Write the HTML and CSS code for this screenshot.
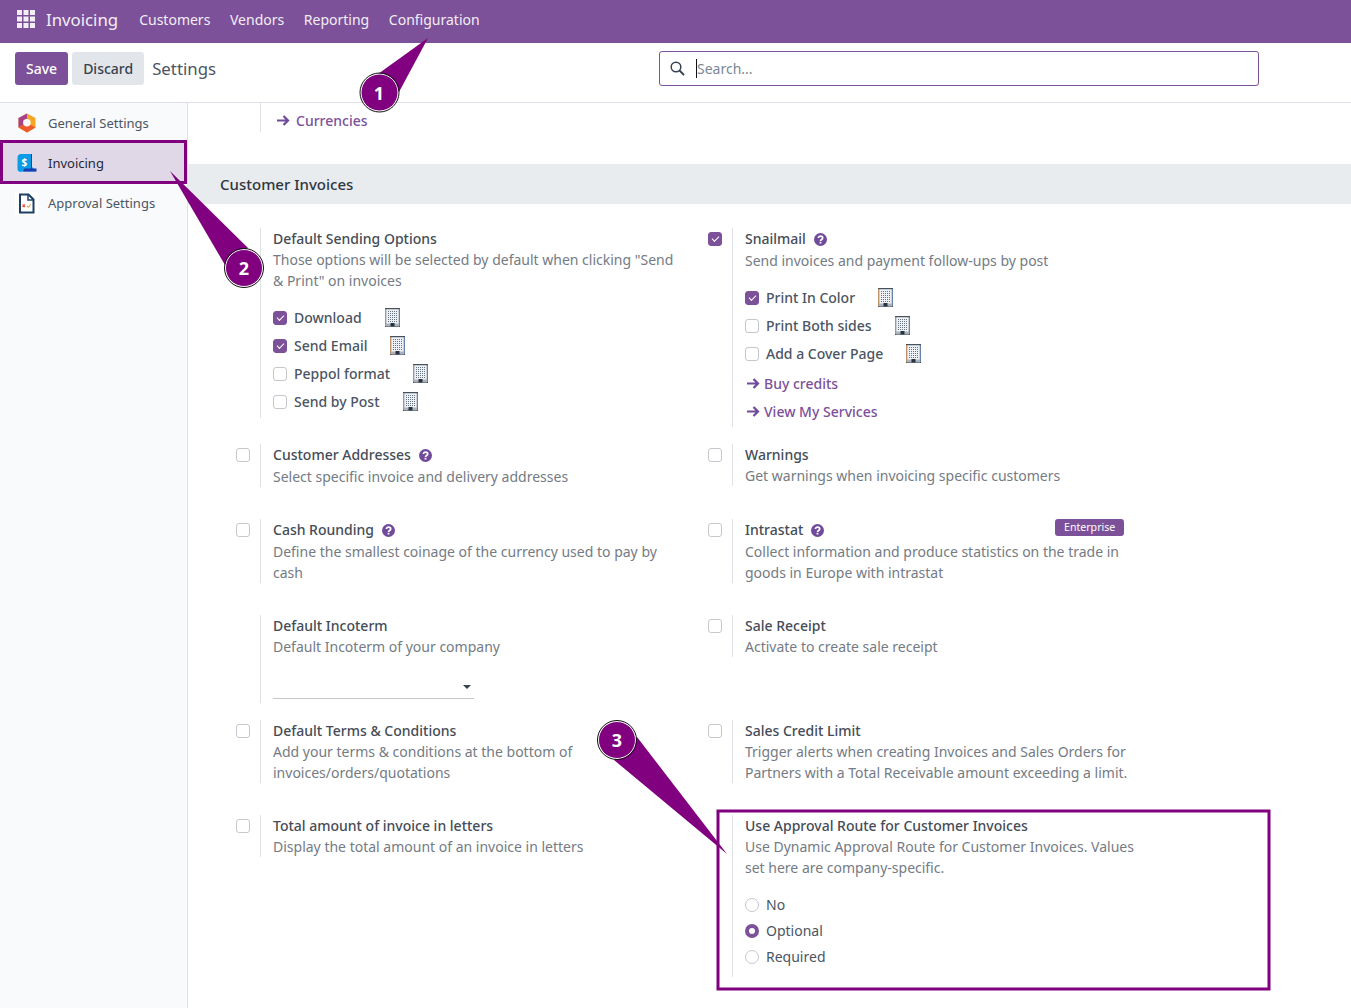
FILE: index.html
```html
<!DOCTYPE html>
<html lang="en">
<head>
<meta charset="utf-8">
<title>Invoicing Settings</title>
<link rel="stylesheet" href="styles.css">
</head>
<body>
<svg width="0" height="0" class="defs">
  <symbol id="bld" viewBox="0 0 15 19">
    <path d="M.6.600h13.800v17.800H.600z" fill="#eef2f6" stroke="#46535f" stroke-width="1.200"/>
    <path d="M3 3.500h9M3 5.500h9M3 7.500h9M3 9.500h9M3 11.500h9M3 13.500h9" stroke="#66727f" stroke-dasharray="1 1"/>
    <path d="M1 15.500h13v3H1z" fill="#aab3bd"/>
    <path d="M5.500 15h4v3.500h-4z" fill="#2b323b"/>
    <path d="M.5 1v17" stroke="#d9a26d" stroke-width=".8"/>
    <path d="M14.500 1v17" stroke="#6f8fb5" stroke-width=".8"/>
  </symbol>
  <symbol id="help" viewBox="0 0 13 13">
    <circle cx="6.500" cy="6.500" r="6.500" fill="#714b9b"/>
    <path d="M4.400 5c0-2.500 4.300-2.500 4.300 0 0 1.500-2.200 1.400-2.200 2.900" fill="none" stroke="#fff" stroke-width="1.700"/>
    <path d="M5.600 8.800h1.800v1.700H5.600z" fill="#fff"/>
  </symbol>
  <symbol id="arrow" viewBox="0 0 13 11">
    <path d="M0 5.500h10.500M6.500 1 11 5.500 6.500 10" fill="none" stroke="#714b9b" stroke-width="2.200"/>
  </symbol>
</svg>

<header class="navbar">
  <svg class="apps" viewBox="0 0 18 18" width="18" height="18">
    <path d="M0 0h5v5H0zM6.500 0h5v5h-5zM13 0h5v5h-5zM0 6.500h5v5H0zM6.500 6.500h5v5h-5zM13 6.500h5v5h-5zM0 13h5v5H0zM6.500 13h5v5h-5zM13 13h5v5h-5z" fill="#f3eef6"/>
  </svg>
  <span class="brand">Invoicing</span>
  <nav class="menu">
    <span>Customers</span><span>Vendors</span><span>Reporting</span><span>Configuration</span>
  </nav>
</header>

<div class="control">
  <div class="actions">
    <button class="btn primary">Save</button>
    <button class="btn secondary">Discard</button>
    <span class="crumb">Settings</span>
  </div>
  <div class="search">
    <svg width="15" height="15" viewBox="0 0 15 15"><circle cx="6" cy="6" r="4.800" fill="none" stroke="#374151" stroke-width="1.500"/><path d="m9.500 9.500 4.500 4.500" stroke="#374151" stroke-width="1.800"/></svg>
    <span class="caret"></span><span class="placeholder">Search...</span>
  </div>
</div>

<div class="main">
  <aside class="side">
    <div class="tab">
      <svg width="20" height="20" viewBox="0 0 20 20"><path d="M10 .5 18.500 5v9.500L10 19.500 1.500 14.500V5z" fill="#f5a623"/><path d="M10 .5 1.500 5v9.500l4.500-2.500V7.500L10 5.500z" fill="#a8418a"/><path d="M1.500 14.500 10 19.500l8.500-5-4.500-2.500H6z" fill="#ef5a2c"/><circle cx="10" cy="9.800" r="3.700" fill="#f9fafb"/></svg>
      <span>General Settings</span>
    </div>
    <div class="tab active">
      <svg width="20" height="20" viewBox="0 0 20 20"><path d="M4 1h11v13l4 3.500v1H5l-1 .5c-2 0-3.500-1-3.500-3V4.500C.5 2.500 2 1 4 1z" fill="#0c9be6"/><path d="M15 1v14.500h4.500V18.500H6l1.500-3H14V1z" fill="#1c3db0"/><text x="4.500" y="13" class="dollar">$</text></svg>
      <span>Invoicing</span>
    </div>
    <div class="tab">
      <svg class="wide" width="23" height="23" viewBox="0 0 23 23"><rect width="23" height="23" fill="#fff"/><path d="M5 2.500h8.500L18.500 7.500v13H5z" fill="#fff" stroke="#1d3f66" stroke-width="2"/><path d="M13 2.500V8h5.500" fill="none" stroke="#1d3f66" stroke-width="1.500"/><path d="m7.500 12.500 2.500 2.500M10 12.500 7.500 15" stroke="#e8543a" stroke-width="1.100"/><path d="m12 14 1.300 1.300 2.500-3" fill="none" stroke="#e8a25c" stroke-width="1.100"/></svg>
      <span>Approval Settings</span>
    </div>
  </aside>

  <main class="content">
    <div class="currencies">
      <div class="cur-pane">
        <a class="link"><svg class="arr" width="13" height="11"><use href="#arrow"/></svg>Currencies</a>
      </div>
    </div>
    <h2 class="section">Customer Invoices</h2>

    <div class="grid">
      <div class="cell tall">
        <div class="lead"></div>
        <div class="pane">
          <div class="title">Default Sending Options</div>
          <div class="desc">Those options will be selected by default when clicking "Send &amp; Print" on invoices</div>
          <div class="opts pad">
            <label class="opt"><i class="cb on"></i>Download<svg class="bld" width="15" height="19"><use href="#bld"/></svg></label>
            <label class="opt"><i class="cb on"></i>Send Email<svg class="bld" width="15" height="19"><use href="#bld"/></svg></label>
            <label class="opt"><i class="cb"></i>Peppol format<svg class="bld" width="15" height="19"><use href="#bld"/></svg></label>
            <label class="opt"><i class="cb"></i>Send by Post<svg class="bld" width="15" height="19"><use href="#bld"/></svg></label>
          </div>
        </div>
      </div>
      <div class="cell tall">
        <div class="lead"><i class="cb on"></i></div>
        <div class="pane bottom">
          <div class="title hq">Snailmail<svg class="q" width="13" height="13"><use href="#help"/></svg></div>
          <div class="desc">Send invoices and payment follow-ups by post</div>
          <div class="opts">
            <label class="opt"><i class="cb on"></i>Print In Color<svg class="bld" width="15" height="19"><use href="#bld"/></svg></label>
            <label class="opt"><i class="cb"></i>Print Both sides<svg class="bld" width="15" height="19"><use href="#bld"/></svg></label>
            <label class="opt"><i class="cb"></i>Add a Cover Page<svg class="bld" width="15" height="19"><use href="#bld"/></svg></label>
          </div>
          <a class="link row"><svg class="arr" width="13" height="11"><use href="#arrow"/></svg>Buy credits</a>
          <a class="link row"><svg class="arr" width="13" height="11"><use href="#arrow"/></svg>View My Services</a>
        </div>
      </div>

      <div class="cell">
        <div class="lead"><i class="cb"></i></div>
        <div class="pane">
          <div class="title hq">Customer Addresses<svg class="q" width="13" height="13"><use href="#help"/></svg></div>
          <div class="desc">Select specific invoice and delivery addresses</div>
        </div>
      </div>
      <div class="cell">
        <div class="lead"><i class="cb"></i></div>
        <div class="pane">
          <div class="title">Warnings</div>
          <div class="desc">Get warnings when invoicing specific customers</div>
        </div>
      </div>

      <div class="cell">
        <div class="lead"><i class="cb"></i></div>
        <div class="pane">
          <div class="title hq">Cash Rounding<svg class="q" width="13" height="13"><use href="#help"/></svg></div>
          <div class="desc">Define the smallest coinage of the currency used to pay by cash</div>
        </div>
      </div>
      <div class="cell">
        <div class="lead"><i class="cb"></i></div>
        <div class="pane badge-host">
          <span class="badge">Enterprise</span>
          <div class="title hq">Intrastat<svg class="q" width="13" height="13"><use href="#help"/></svg></div>
          <div class="desc">Collect information and produce statistics on the trade in goods in Europe with intrastat</div>
        </div>
      </div>

      <div class="cell tall">
        <div class="lead"></div>
        <div class="pane">
          <div class="title">Default Incoterm</div>
          <div class="desc">Default Incoterm of your company</div>
          <div class="select"></div>
        </div>
      </div>
      <div class="cell">
        <div class="lead"><i class="cb"></i></div>
        <div class="pane">
          <div class="title">Sale Receipt</div>
          <div class="desc">Activate to create sale receipt</div>
        </div>
      </div>

      <div class="cell">
        <div class="lead"><i class="cb"></i></div>
        <div class="pane">
          <div class="title">Default Terms &amp; Conditions</div>
          <div class="desc">Add your terms &amp; conditions at the bottom of invoices/orders/quotations</div>
        </div>
      </div>
      <div class="cell">
        <div class="lead"><i class="cb"></i></div>
        <div class="pane">
          <div class="title">Sales Credit Limit</div>
          <div class="desc">Trigger alerts when creating Invoices and Sales Orders for Partners with a Total Receivable amount exceeding a limit.</div>
        </div>
      </div>

      <div class="cell">
        <div class="lead"><i class="cb"></i></div>
        <div class="pane">
          <div class="title">Total amount of invoice in letters</div>
          <div class="desc">Display the total amount of an invoice in letters</div>
        </div>
      </div>
      <div class="cell">
        <div class="lead"></div>
        <div class="pane">
          <div class="title">Use Approval Route for Customer Invoices</div>
          <div class="desc">Use Dynamic Approval Route for Customer Invoices. Values set here are company-specific.</div>
          <div class="radios">
            <label class="radio"><i class="rd"></i>No</label>
            <label class="radio"><i class="rd on"></i>Optional</label>
            <label class="radio"><i class="rd"></i>Required</label>
          </div>
        </div>
      </div>
    </div>
  </main>
</div>

<svg class="marks" width="1351" height="1008" viewBox="0 0 1351 1008">
  <g fill="none" stroke="#800080" stroke-width="3">
    <rect x="1.500" y="141.500" width="184" height="41"/>
    <rect x="718" y="811" width="551" height="178"/>
  </g>
  <g fill="#800080">
    <path d="M428 38 378 74 399 92z"/>
    <path d="M170 171 225 265 248 248z"/>
    <path d="M637 737 727 854 614 760z"/>
  </g>
  <g>
    <circle cx="379.500" cy="92.500" r="18.500" fill="#800080" stroke="#fff" stroke-width="1"/><circle cx="379.500" cy="92.500" r="19.500" fill="none" stroke="#111" stroke-width="1"/>
    <circle cx="244" cy="268" r="18.500" fill="#800080" stroke="#fff" stroke-width="1"/><circle cx="244" cy="268" r="19.500" fill="none" stroke="#111" stroke-width="1"/>
    <circle cx="617" cy="740" r="18.500" fill="#800080" stroke="#fff" stroke-width="1"/><circle cx="617" cy="740" r="19.500" fill="none" stroke="#111" stroke-width="1"/>
    <text x="379" y="100" class="num">1</text>
    <text x="244" y="275" class="num">2</text>
    <text x="617" y="747" class="num">3</text>
  </g>
</svg>
</body>
</html>
```
FILE: styles.css
```css
* { box-sizing: border-box; }
html, body { margin: 0; height: 1008px; overflow: hidden; }
body { font: 14px/21px "Noto Sans", sans-serif; color: #4b5563; background: #fff; position: relative; }
.defs { position: absolute; }

.navbar { height: 43px; background: #7c5199; display: flex; align-items: center; padding: 0 0 5px 17px; color: #f3eef6; }
.apps { margin-right: 11px; }
.brand { font-size: 16.800px; margin-right: 21px; }
.menu { display: flex; gap: 19.600px; font-size: 14px; }

.control { height: 60px; border-bottom: 1px solid #dee2e6; display: flex; align-items: flex-start; padding: 8px 0 0 15px; }
.actions { display: flex; align-items: center; gap: 4px; width: 644px; margin-top: 1px; }
.btn { font: 500 14px/21px "Noto Sans", sans-serif; height: 33px; border: 0; border-radius: 3px; padding: 0 11px; }
.primary { background: #7c5199; color: #fff; }
.secondary { background: #e2e6ea; color: #374151; }
.crumb { font-size: 16.800px; margin-left: 4px; color: #4b5563; }
.search { width: 600px; height: 35px; border: 1px solid #7c5199; border-radius: 3px; display: flex; align-items: center; padding-left: 10px; }
.caret { width: 1px; height: 19px; background: #111; margin-left: 11px; }
.placeholder { color: #7b8794; }

.main { display: flex; height: 905px; }
.side { width: 188px; background: #f9fafb; border-right: 1px solid #dee2e6; flex: none; }
.tab { height: 40px; display: flex; align-items: center; gap: 11px; padding-left: 17px; font-size: 13px; color: #4b5563; }
.tab.active { background: #e0d8e7; color: #1f2937; }
.wide { margin: 0 -1px 0 -2px; }
.dollar { font: 700 10px "Noto Sans", sans-serif; fill: #fff; }
.content { flex: 1; min-width: 0; }

.currencies { height: 61px; padding-left: 72px; }
.cur-pane { height: 29px; border-left: 1px solid #dee2e6; padding: 7px 0 0 16px; }
.link { color: #7c5199; font-weight: 500; display: flex; align-items: center; gap: 6px; line-height: 21px; }
.arr { flex: none; }
.section { margin: 0; height: 40px; background: #e9ecef; padding-left: 32px; font-size: 15px; line-height: 41px; font-weight: 500; color: #2f3640; }

.grid { display: grid; grid-template-columns: 472px 472px; padding: 24px 0 0 32px; align-items: start; }
.cell { display: flex; margin-bottom: 32px; }
.cell.tall { margin-bottom: 17px; }
.lead { width: 40px; flex: none; padding: 4px 0 0 16px; line-height: 0; }
.pane { border-left: 1px solid #dee2e6; padding-left: 12px; width: 418px; }
.pane.bottom { padding-bottom: 5px; }
.badge-host { position: relative; }
.title { font-weight: 500; color: #454c57; display: flex; align-items: flex-start; height: 21px; }
.title.hq { height: 22px; }
.q { margin: 5px 0 0 8px; }
.desc { color: #747b84; }

.cb { display: inline-block; width: 14px; height: 14px; border: 1px solid #c4c8cd; border-radius: 3px; background: #fff; flex: none; position: relative; }
.cb.on { background: #7c5199; border-color: #7c5199; }
.cb.on::after { content: ""; position: absolute; left: 3px; top: 3px; width: 6px; height: 3px; border-left: 1.500px solid #fff; border-bottom: 1.500px solid #fff; transform: rotate(-45deg); }

.opts { margin-top: 16px; display: flex; flex-direction: column; gap: 7px; }
.opts.pad { padding-bottom: 6px; }
.opt { display: flex; align-items: center; height: 21px; font-weight: 500; }
.opt .cb { margin-right: 7px; }
.bld { margin-left: 23px; }
.row { margin-top: 7px; padding-left: 2px; gap: 4px; }
.opts + .row { margin-top: 9px; }

.badge { position: absolute; left: 322px; top: 0; background: #7c5199; color: #fff; font-size: 10.600px; line-height: 17px; height: 17px; padding: 0 9px; border-radius: 3px; }
.select { width: 201px; height: 21px; border-bottom: 1px solid #c4c8cd; margin: 21px 0 4px; position: relative; }
.select::after { content: ""; position: absolute; right: 3px; top: 7px; border: 4px solid transparent; border-top-color: #374151; border-bottom: 0; }

.radios { margin-top: 16px; display: flex; flex-direction: column; gap: 5px; padding-bottom: 10px; }
.radio { display: flex; align-items: center; height: 21px; }
.rd { width: 14px; height: 14px; border: 1px solid #c4c8cd; border-radius: 50%; background: #fff; margin-right: 7px; flex: none; }
.rd.on { border: 4px solid #7c5199; }

.marks { position: absolute; left: 0; top: 0; pointer-events: none; }
.num { font: 700 18px "Noto Sans", sans-serif; fill: #fff; text-anchor: middle; }
```
